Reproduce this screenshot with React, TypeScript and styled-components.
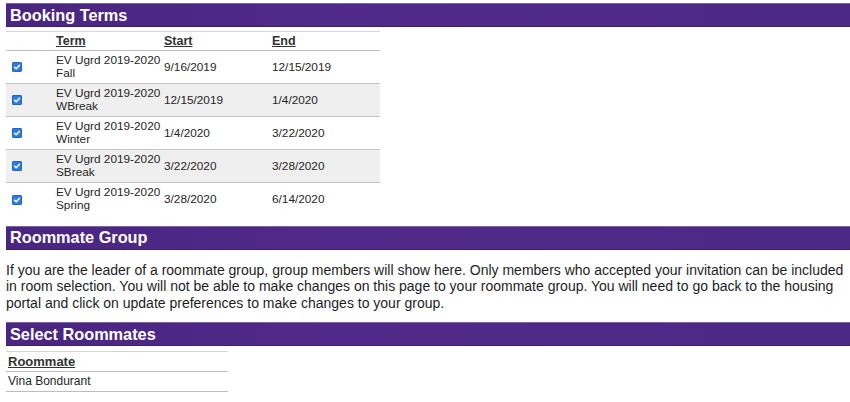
import React from 'react'
import styled, { createGlobalStyle } from 'styled-components'

interface TermInterface {
  year: string
  season: string
  start: string
  end: string
}

const terms: TermInterface[] = [
  { year: 'EV Ugrd 2019-2020', season: 'Fall', start: '9/16/2019', end: '12/15/2019' },
  { year: 'EV Ugrd 2019-2020', season: 'WBreak', start: '12/15/2019', end: '1/4/2020' },
  { year: 'EV Ugrd 2019-2020', season: 'Winter', start: '1/4/2020', end: '3/22/2020' },
  { year: 'EV Ugrd 2019-2020', season: 'SBreak', start: '3/22/2020', end: '3/28/2020' },
  { year: 'EV Ugrd 2019-2020', season: 'Spring', start: '3/28/2020', end: '6/14/2020' },
]

/*-- styled-component --*/
const GlobalStyle = createGlobalStyle`
  body {
    margin: 0;
    background: #fff;
    font-family: "Liberation Sans", Arial, sans-serif;
    color: #222;
  }
`

const Page = styled.div`
  display: flex;
  flex-flow: column;
  padding: 3px 0 0 6px;
`

const SectionTitle = styled.h2<{ $gap?: number }>`
  margin: ${(p) => p.$gap ?? 0}px 0 0;
  height: 22px;
  padding-left: 4px;
  display: flex;
  align-items: center;
  font-size: 16.3px;
  font-weight: bold;
  color: #fff;
  background: linear-gradient(90deg, #4a2680 0%, #51298a 40%, #4c2985 100%);
  border-top: 1px solid #7d62a8;
  border-bottom: 1px solid #3a2166;
`

const Table = styled.table<{ $width: number; $gap: number }>`
  width: ${(p) => p.$width}px;
  margin-top: ${(p) => p.$gap}px;
  border-collapse: collapse;
  table-layout: fixed;
  font-size: 11.8px;
  line-height: 13px;
  border-top: 1px solid #d6d6d6;

  th {
    text-align: left;
    font-weight: bold;
    font-size: 12.5px;
    text-decoration: underline;
    color: #333;
    height: 18px;
    padding: 0;
    border-bottom: 1px solid #bdbdbd;
  }

  td {
    padding: 0;
    vertical-align: middle;
    color: #262626;
  }
`

const TermRow = styled.tr<{ $shade: boolean }>`
  height: 33px;
  background: ${(p) => (p.$shade ? '#efefef' : '#fff')};
  border-bottom: 1px solid #c4c4c4;

  &:last-child {
    border-bottom: none;
  }
`

const CheckCol = styled.col`
  width: 50px;
`

const DataCol = styled.col`
  width: 108px;
`

const CheckCell = styled.td`
  padding-left: 6px !important;
`

const Check = styled.span`
  display: inline-flex;
  align-items: center;
  justify-content: center;
  width: 10px;
  height: 10px;
  border-radius: 2px;
  background: #2f7de1;
  box-shadow: 0 0 0 1px #1f66c4 inset;
  vertical-align: middle;
`

const TermLine = styled.span`
  display: block;
  white-space: nowrap;
`

const Paragraph = styled.p`
  margin: 12px 0 0;
  font-size: 14px;
  line-height: 16.5px;
  color: #1e1e1e;
`

const MateHead = styled.th`
  padding-left: 2px !important;
  height: 19px !important;
  font-size: 13px !important;
`

const MateRow = styled.tr`
  height: 20px;
  border-bottom: 1px solid #bdbdbd;

  td {
    padding-left: 2px;
    font-size: 12px;
  }
`

const CheckMark: React.FC = () => (
  <svg width='8' height='8' viewBox='0 0 8 8'>
    <path d='M1.5 4.2 L3.2 5.8 L6.5 2.2' fill='none' stroke='#fff' strokeWidth='1.5' strokeLinecap='round' strokeLinejoin='round' />
  </svg>
)

const App: React.FC = () => {
  /*-- element --*/
  return <>
    <GlobalStyle />
    <Page>
      <SectionTitle>Booking Terms</SectionTitle>
      <Table $width={374} $gap={4}>
        <colgroup>
          <CheckCol />
          <DataCol />
          <DataCol />
          <DataCol />
        </colgroup>
        <thead>
          <tr>
            <th />
            <th>Term</th>
            <th>Start</th>
            <th>End</th>
          </tr>
        </thead>
        <tbody>
          {terms.map((term, i) => (
            <TermRow key={term.season} $shade={i % 2 === 1}>
              <CheckCell>
                <Check><CheckMark /></Check>
              </CheckCell>
              <td>
                <TermLine>{term.year}</TermLine>
                <TermLine>{term.season}</TermLine>
              </td>
              <td>{term.start}</td>
              <td>{term.end}</td>
            </TermRow>
          ))}
        </tbody>
      </Table>
      <SectionTitle $gap={10}>Roommate Group</SectionTitle>
      <Paragraph>
        If you are the leader of a roommate group, group members will show here. Only members who accepted your invitation can be included in room selection. You will not be able to make changes on this page to your roommate group. You will need to go back to the housing portal and click on update preferences to make changes to your group.
      </Paragraph>
      <SectionTitle $gap={11}>Select Roommates</SectionTitle>
      <Table $width={222} $gap={5}>
        <thead>
          <tr>
            <MateHead>Roommate</MateHead>
          </tr>
        </thead>
        <tbody>
          <MateRow>
            <td>Vina Bondurant</td>
          </MateRow>
        </tbody>
      </Table>
    </Page>
  </>
}

export default App
